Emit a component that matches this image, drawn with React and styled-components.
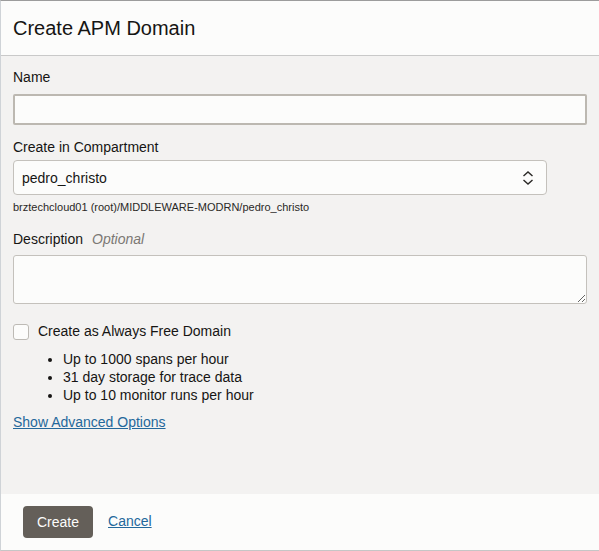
import styled, { createGlobalStyle } from 'styled-components';

const GlobalStyle = createGlobalStyle`
  html, body {
    margin: 0;
    padding: 0;
    background: #fcfcfb;
  }
  * {
    box-sizing: border-box;
  }
`;

const Panel = styled.div`
  width: 599px;
  height: 551px;
  display: flex;
  flex-direction: column;
  border-top: 1px solid #9c9c9c;
  border-left: 1px solid #cfd3d7;
  border-bottom: 1px solid #c6c6c6;
  font-family: 'Liberation Sans', Arial, sans-serif;
  color: #161513;
  background: #fcfcfb;
`;

const Header = styled.header`
  height: 55px;
  flex-shrink: 0;
  display: flex;
  align-items: center;
  padding: 0 12px;
  border-bottom: 1px solid #c9c9c9;
  background: #fcfcfb;
`;

const Title = styled.h1`
  margin: 0 0 1px;
  font-size: 20px;
  font-weight: 400;
  line-height: 24px;
`;

const Body = styled.div`
  flex: 1;
  display: flex;
  flex-direction: column;
  align-items: flex-start;
  padding: 12px 12px 0;
  background: #f3f2f1;
`;

const Label = styled.label`
  display: block;
  font-size: 14px;
  line-height: 17px;
  margin-top: ${props => props.$top || 0}px;
  margin-bottom: ${props => props.$gap || 8}px;
`;

const Optional = styled.span`
  font-style: italic;
  color: #7b7874;
  margin-left: 9px;
`;

const TextInput = styled.input`
  display: block;
  width: 574px;
  height: 31px;
  margin: 0;
  border: 2px solid #bcb8b1;
  border-radius: 2px;
  background: #fcfcfb;
  font: inherit;
  font-size: 14px;
  outline: none;
`;

const SelectBox = styled.div`
  width: 534px;
  height: 35px;
  display: flex;
  align-items: center;
  justify-content: space-between;
  padding: 0 12px 0 8px;
  border: 1px solid #c4c1bc;
  border-radius: 4px;
  background: #fcfcfb;
  font-size: 14px;
`;

const Help = styled.div`
  font-size: 11px;
  line-height: 13px;
  margin-top: 6px;
  color: #2a2826;
`;

const TextArea = styled.textarea`
  display: block;
  width: 574px;
  height: 49px;
  margin: 0;
  border: 1px solid #c4c1bc;
  border-radius: 3px;
  background: #fcfcfb;
  font: inherit;
  outline: none;
`;

const CheckRow = styled.label`
  display: flex;
  align-items: center;
  gap: 9px;
  margin-top: 19px;
  font-size: 14px;
  line-height: 17px;
`;

const CheckBox = styled.span`
  width: 16px;
  height: 16px;
  border: 1px solid #bdbab5;
  border-radius: 3px;
  background: #fcfcfb;
`;

const List = styled.ul`
  margin: 10px 0 0;
  padding-left: 50px;
  font-size: 14px;
  line-height: 18px;

  li {
    height: 18px;
  }
`;

const Link = styled.a`
  color: #24689b;
  text-decoration: underline;
  font-size: 14px;
  line-height: 17px;
  margin-top: ${props => props.$top || 0}px;
  cursor: pointer;
`;

const Footer = styled.footer`
  height: 56px;
  flex-shrink: 0;
  display: flex;
  align-items: center;
  gap: 15px;
  padding: 0 22px 1px;
  background: #fcfcfb;
`;

const Button = styled.button`
  height: 32px;
  padding: 0 14px;
  border: none;
  border-radius: 4px;
  background: #645f59;
  color: #fcfcfb;
  font: inherit;
  font-size: 14px;
`;

const SortIcon = () => (
  <svg width="12" height="14" viewBox="0 0 12 14" fill="none" stroke="#2a2826" strokeWidth="1.4">
    <path d="M1.5 5 L6 1 L10.5 5" />
    <path d="M1.5 9 L6 13 L10.5 9" />
  </svg>
);

const App = () => {
  return (
    <>
      <GlobalStyle />
      <Panel>
        <Header>
          <Title>Create APM Domain</Title>
        </Header>
        <Body>
          <Label $top={1} $gap={8}>Name</Label>
          <TextInput />

          <Label $top={14} $gap={4}>Create in Compartment</Label>
          <SelectBox>
            <span>pedro_christo</span>
            <SortIcon />
          </SelectBox>
          <Help>brztechcloud01 (root)/MIDDLEWARE-MODRN/pedro_christo</Help>

          <Label $top={17} $gap={7}>
            Description<Optional>Optional</Optional>
          </Label>
          <TextArea />

          <CheckRow>
            <CheckBox />
            Create as Always Free Domain
          </CheckRow>
          <List>
            <li>Up to 1000 spans per hour</li>
            <li>31 day storage for trace data</li>
            <li>Up to 10 monitor runs per hour</li>
          </List>

          <Link $top={10}>Show Advanced Options</Link>
        </Body>
        <Footer>
          <Button>Create</Button>
          <Link>Cancel</Link>
        </Footer>
      </Panel>
    </>
  );
};

export default App;
